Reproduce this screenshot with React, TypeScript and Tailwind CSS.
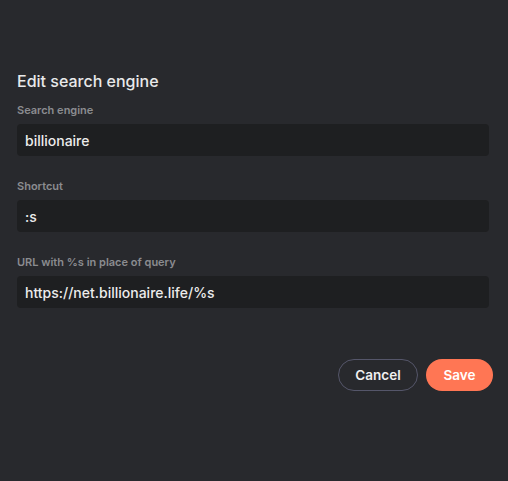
import React from 'react';

const fields = [
  { label: 'Search engine', value: 'billionaire' },
  { label: 'Shortcut', value: ':s' },
  { label: 'URL with %s in place of query', value: 'https://net.billionaire.life/%s' },
];

const App: React.FC = () => {
  return (
    <div
      className="min-h-screen w-full bg-[#28292d] pl-[17px] pr-[19px] pt-[69px]"
      style={{ fontFamily: 'Inter, "Noto Sans", sans-serif' }}
    >
      {/* 제목 */}
      <h1 className="text-[16px] leading-6 font-medium text-[#e9e9ea]">Edit search engine</h1>

      {/* 입력 필드 */}
      {fields.map((f, i) => (
        <div key={f.label} className={i === 0 ? 'mt-[10px]' : 'mt-[23px]'}>
          <label className="block text-[11px] leading-[14px] font-semibold text-[#8b8c90]">{f.label}</label>
          <input
            readOnly
            value={f.value}
            className="mt-[7px] block h-8 w-full rounded-[4px] bg-[#1e1f21] px-2 text-[14px] font-medium text-[#ececec] outline-none"
          />
        </div>
      ))}

      {/* 버튼 */}
      <div className="mt-[51px] flex justify-end gap-2 -mr-1">
        <button className="h-8 w-[80px] rounded-full border border-[#55566a] text-[13.5px] font-semibold text-[#f0f0f0]">
          Cancel
        </button>
        <button className="h-8 w-[67px] rounded-full bg-[#ff7654] text-[13.5px] font-semibold text-white">
          Save
        </button>
      </div>
    </div>
  );
};

export default App;
